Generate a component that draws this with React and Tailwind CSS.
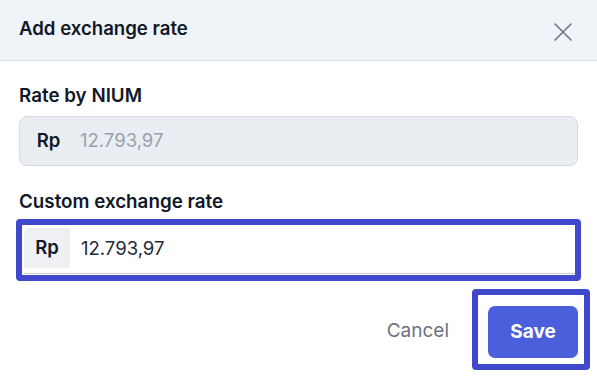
export default function App() {
  return (
    <div className="w-[597px] h-[379px] bg-white overflow-hidden font-['Inter',sans-serif] text-[#111827]">
      {/* header */}
      <div className="h-[61px] bg-[#f0f3f8] border-b border-[#d5d9e1] flex items-center justify-between pl-[19px] pr-[25px]">
        <h2 className="text-[18.6px] font-semibold leading-[24px] -mt-[4px]">Add exchange rate</h2>
        <svg width="18" height="18" viewBox="0 0 18 18" className="mt-[4px]" stroke="#6b7280" strokeWidth="1.6" strokeLinecap="round">
          <line x1="1" y1="1" x2="17" y2="17" />
          <line x1="17" y1="1" x2="1" y2="17" />
        </svg>
      </div>

      {/* body */}
      <div className="px-[19px] pt-[23px]">
        <label className="block text-[18.8px] font-semibold leading-[24px]">Rate by NIUM</label>
        <div className="mt-[8px] h-[50px] rounded-[8px] border border-[#d5d9e0] bg-[#eaedf1] flex items-center">
          <span className="w-[56px] text-center font-semibold text-[18.5px] pl-[1px]">Rp</span>
          <span className="ml-[4px] text-[18.5px] text-[#9aa1ad]">12.793,97</span>
        </div>

        <label className="block mt-[24px] text-[18.8px] font-semibold leading-[24px]">Custom exchange rate</label>
        <div className="mt-[5px] -mx-[3px] border-[6px] border-[#4049cc] rounded-[4px]">
          <div className="h-[50px] pt-[3px] pl-[2px] pb-[1px] bg-white">
            <div className="h-full border-b border-[#c9cdd8] flex items-start">
              <div className="w-[46px] h-[40px] bg-[#eef0f3] rounded-tl-[6px] flex items-center justify-center font-semibold text-[18.5px]">
                Rp
              </div>
              <span className="ml-[11px] leading-[40px] text-[18.5px] text-[#1f2937]">12.793,97</span>
            </div>
          </div>
        </div>
      </div>

      {/* footer */}
      <div className="mt-[8px] flex items-center justify-end pr-[7px] gap-[23px]">
        <button className="text-[19px] text-[#6b7280] mt-[4px]">Cancel</button>
        <div className="border-[6px] border-[#4049cc] rounded-[4px] pt-[11px] pl-[10px] pr-[6px] pb-[6px]">
          <button className="w-[90px] h-[52px] rounded-[7px] bg-[#4b5fdc] text-white text-[19px] font-bold">
            Save
          </button>
        </div>
      </div>
    </div>
  );
}
